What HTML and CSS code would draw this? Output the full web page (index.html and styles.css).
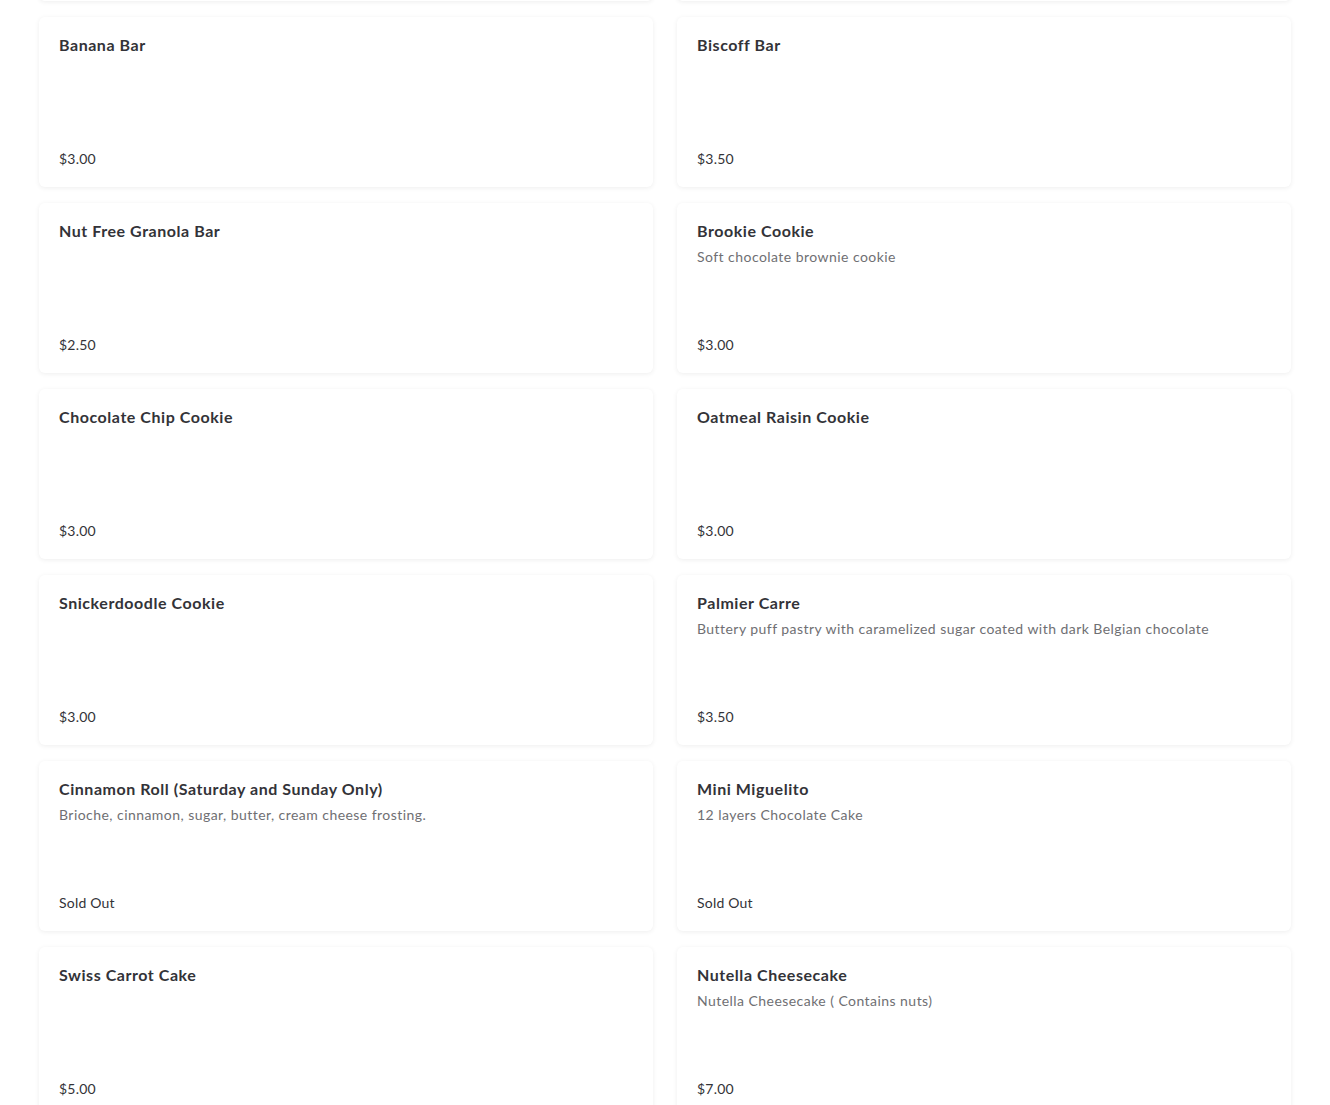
FILE: index.html
```html
<!DOCTYPE html>
<html>
<head>
    <meta charset="UTF-8" />
    <title>Menu</title>
    <link rel="stylesheet" href="styles.css">
</head>
<body>
    <div class="menu-grid">
        <!-- row above, scrolled out of view -->
        <div class="item-card"></div>
        <div class="item-card"></div>

        <div class="item-card">
            <h3 class="item-name">Banana Bar</h3>
            <p class="item-price">$3.00</p>
        </div>
        <div class="item-card">
            <h3 class="item-name">Biscoff Bar</h3>
            <p class="item-price">$3.50</p>
        </div>

        <div class="item-card">
            <h3 class="item-name">Nut Free Granola Bar</h3>
            <p class="item-price">$2.50</p>
        </div>
        <div class="item-card">
            <h3 class="item-name">Brookie Cookie</h3>
            <p class="item-desc">Soft chocolate brownie cookie</p>
            <p class="item-price">$3.00</p>
        </div>

        <div class="item-card">
            <h3 class="item-name">Chocolate Chip Cookie</h3>
            <p class="item-price">$3.00</p>
        </div>
        <div class="item-card">
            <h3 class="item-name">Oatmeal Raisin Cookie</h3>
            <p class="item-price">$3.00</p>
        </div>

        <div class="item-card">
            <h3 class="item-name">Snickerdoodle Cookie</h3>
            <p class="item-price">$3.00</p>
        </div>
        <div class="item-card">
            <h3 class="item-name">Palmier Carre</h3>
            <p class="item-desc">Buttery puff pastry with caramelized sugar coated with dark Belgian chocolate</p>
            <p class="item-price">$3.50</p>
        </div>

        <div class="item-card">
            <h3 class="item-name">Cinnamon Roll (Saturday and Sunday Only)</h3>
            <p class="item-desc">Brioche, cinnamon, sugar, butter, cream cheese frosting.</p>
            <p class="item-price">Sold Out</p>
        </div>
        <div class="item-card">
            <h3 class="item-name">Mini Miguelito</h3>
            <p class="item-desc">12 layers Chocolate Cake</p>
            <p class="item-price">Sold Out</p>
        </div>

        <div class="item-card">
            <h3 class="item-name">Swiss Carrot Cake</h3>
            <p class="item-price">$5.00</p>
        </div>
        <div class="item-card">
            <h3 class="item-name">Nutella Cheesecake</h3>
            <p class="item-desc">Nutella Cheesecake ( Contains nuts)</p>
            <p class="item-price">$7.00</p>
        </div>
    </div>
</body>
</html>
```

FILE: styles.css
```css
:root {
    --text: #333338;
    --muted: #6f6f73;
    --card: #ffffff;
}

body {
    font-family: 'Lato', 'Liberation Sans', sans-serif;
    margin: 0;
    padding: 0;
    background: #ffffff;
    color: var(--text);
    overflow: hidden;
}

/* page is scrolled, so the row above is only peeking in */
.menu-grid {
    display: grid;
    grid-template-columns: 1fr 1fr;
    gap: 16px 24px;
    padding: 0 39px;
    margin-top: -169px;
}

.item-card {
    display: flex;
    flex-direction: column;
    min-height: 170px;
    box-sizing: border-box;
    padding: 17px 20px 18px;
    background: var(--card);
    border-radius: 6px;
    box-shadow: 0 1px 5px rgba(0, 0, 0, 0.07);
}

.item-name {
    margin: 0;
    font-size: 16px;
    line-height: 22px;
    font-weight: 700;
    letter-spacing: 0.55px;
    color: var(--text);
}

.item-desc {
    margin: 5px 0 0;
    font-size: 14px;
    line-height: 20px;
    letter-spacing: 0.45px;
    color: var(--muted);
}

.item-price {
    margin: auto 0 0;
    font-size: 14px;
    line-height: 20px;
    letter-spacing: 0.2px;
    color: var(--text);
}
```
